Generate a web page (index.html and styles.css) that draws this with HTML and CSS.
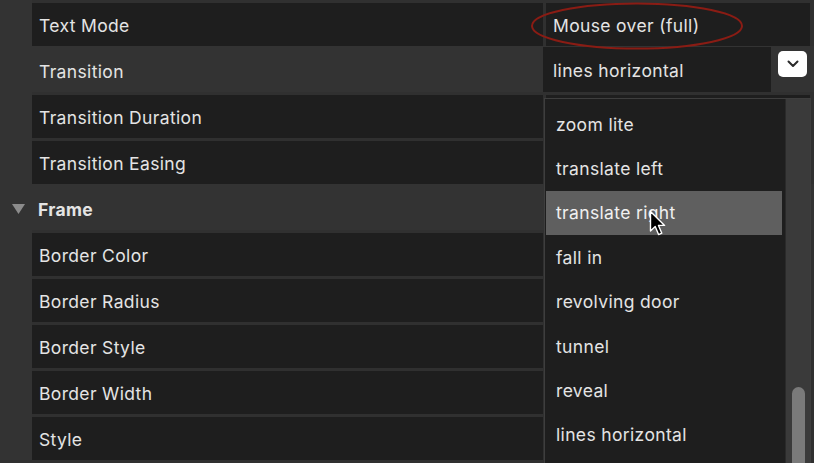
FILE: index.html
```html
<!DOCTYPE html>
<html>
<head>
<meta charset="utf-8">
<link rel="stylesheet" href="styles.css">
</head>
<body>
<div class="table">
  <div class="row">
    <div class="gutter"></div>
    <div class="label">Text Mode</div>
    <div class="sep"></div>
    <div class="value">Mouse over (full)</div>
  </div>
  <div class="row row-active">
    <div class="gutter"></div>
    <div class="label">Transition</div>
    <div class="sep"></div>
    <div class="value value-select">
      <div class="select-box">lines horizontal</div>
      <div class="select-btn">
        <svg width="12" height="8" viewBox="0 0 12 8"><path d="M1.5 1.5 L6 6 L10.5 1.5" fill="none" stroke="#2b2b2b" stroke-width="2" stroke-linecap="round" stroke-linejoin="round"/></svg>
      </div>
    </div>
  </div>
  <div class="row">
    <div class="gutter"></div>
    <div class="label">Transition Duration</div>
    <div class="sep"></div>
    <div class="value"></div>
  </div>
  <div class="row">
    <div class="gutter"></div>
    <div class="label">Transition Easing</div>
    <div class="sep"></div>
    <div class="value"></div>
  </div>
  <div class="row row-section">
    <div class="gutter">
      <svg width="13" height="10" viewBox="0 0 13 10"><path d="M0 0 H13 L6.5 10 Z" fill="#8c8c8c"/></svg>
    </div>
    <div class="label">Frame</div>
    <div class="sep"></div>
    <div class="value"></div>
  </div>
  <div class="row">
    <div class="gutter"></div>
    <div class="label">Border Color</div>
    <div class="sep"></div>
    <div class="value"></div>
  </div>
  <div class="row">
    <div class="gutter"></div>
    <div class="label">Border Radius</div>
    <div class="sep"></div>
    <div class="value"></div>
  </div>
  <div class="row">
    <div class="gutter"></div>
    <div class="label">Border Style</div>
    <div class="sep"></div>
    <div class="value"></div>
  </div>
  <div class="row">
    <div class="gutter"></div>
    <div class="label">Border Width</div>
    <div class="sep"></div>
    <div class="value"></div>
  </div>
  <div class="row">
    <div class="gutter"></div>
    <div class="label">Style</div>
    <div class="sep"></div>
    <div class="value"></div>
  </div>
</div>

<div class="dropdown">
  <div class="options">
    <div class="option">zoom lite</div>
    <div class="option">translate left</div>
    <div class="option option-hover">translate right</div>
    <div class="option">fall in</div>
    <div class="option">revolving door</div>
    <div class="option">tunnel</div>
    <div class="option">reveal</div>
    <div class="option">lines horizontal</div>
  </div>
  <div class="track"><div class="thumb"></div></div>
</div>

<svg class="annotation" width="214" height="50" viewBox="0 0 214 50"><ellipse cx="107" cy="25" rx="105" ry="22.5" fill="none" stroke="#8a1c14" stroke-width="2"/></svg>

<svg class="cursor" width="18" height="27" viewBox="0 0 18 27"><path d="M1.5 1.5 L1.5 21 L6.2 16.6 L9.6 24.6 L12.8 23.2 L9.5 15.4 L15.6 15.4 Z" fill="#000" stroke="#fff" stroke-width="1.4" stroke-linejoin="round"/></svg>
</body>
</html>
```
FILE: styles.css
```css
* { box-sizing: border-box; }
html, body {
  margin: 0;
  padding: 0;
  width: 814px;
  height: 463px;
  overflow: hidden;
  background: #303030;
  font-family: Inter, "Liberation Sans", sans-serif;
  font-size: 17.5px;
  letter-spacing: 0.35px;
  color: #e4e4e4;
}
.table {
  display: flex;
  flex-direction: column;
}
.row {
  display: grid;
  grid-template-columns: 32px 511px 3px 264px 4px;
  height: 46px;
}
.gutter {
  background: #333333;
  display: flex;
  align-items: center;
  padding-left: 12px;
}
.label {
  margin-top: 3px;
  background: #1e1e1e;
  display: flex;
  align-items: center;
  padding-left: 7px;
  padding-top: 2px;
}
.value {
  margin-top: 3px;
  background: #1e1e1e;
  display: flex;
  align-items: center;
  padding-left: 7px;
  padding-top: 2px;
}
.row-active, .row-section {
  background: #333333;
}
.row-active .label, .row-active .value,
.row-section .label, .row-section .value {
  background: transparent;
}
.row-section .label {
  font-weight: 700;
  padding-left: 6px;
}
.row-section .gutter { padding-top: 3px; }
.value-select {
  margin-top: 1px;
  padding-left: 0;
  padding-top: 0;
  margin-left: -3px;
  align-items: flex-start;
}
.select-box {
  width: 228px;
  height: 45px;
  background: #1e1e1e;
  display: flex;
  align-items: center;
  padding-left: 10px;
  padding-top: 2px;
}
.select-btn {
  margin-left: 7px;
  margin-top: 4px;
  width: 29px;
  height: 26px;
  background: #ffffff;
  border-radius: 5px;
  display: flex;
  align-items: center;
  justify-content: center;
}
.dropdown {
  position: absolute;
  left: 544px;
  top: 98px;
  width: 267px;
  height: 370px;
  background: #1e1e1e;
  border: 1px solid #3e3e3e;
  display: flex;
}
.options {
  flex: 1;
  padding: 3px 3px 0 1px;
}
.option {
  height: 44.4px;
  display: flex;
  align-items: center;
  padding-left: 10px;
}
.option-hover {
  background: #5f5f5f;
  color: #f0f0f0;
}
.track {
  width: 25px;
  background: #3a3a3a;
  border-left: 1px solid #2a2a2a;
  position: relative;
}
.thumb {
  position: absolute;
  left: 6px;
  top: 288px;
  width: 13px;
  height: 90px;
  border-radius: 7px;
  background: #7a7a7a;
}
.annotation {
  position: absolute;
  left: 530px;
  top: 1px;
}
.cursor {
  position: absolute;
  left: 649px;
  top: 210px;
}
```
